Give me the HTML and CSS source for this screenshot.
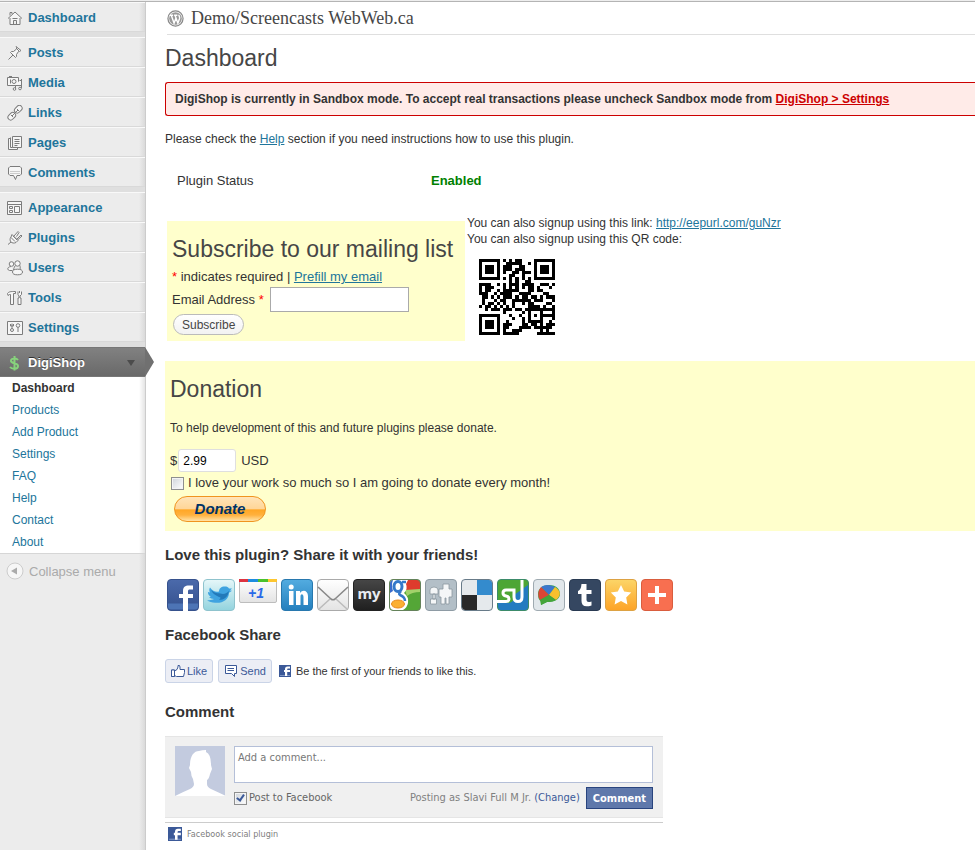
FILE: index.html
```
<!DOCTYPE html>
<html lang="en">
<head>
<meta charset="utf-8">
<meta name="viewport" content="width=device-width, initial-scale=1">
<title>Dashboard - Demo/Screencasts WebWeb.ca</title>
<link rel="stylesheet" href="styles.css">
</head>
<body>
<div class="topbar"></div>
<div class="layout">
  <nav class="sidebar" aria-label="Admin menu">
    <div class="menu-group">
      <a class="menu-item" href="#"><svg class="menu-icon" viewBox="0 0 16 16"><path d="M1 8.500 8 2l7 6.500M3 5.500v-3h2v1.500M3 8v6.500h10V8M6.500 14.500v-4h3v4M5.500 8.500h5"/></svg>Dashboard</a>
    </div>
    <div class="menu-group">
      <a class="menu-item" href="#"><svg class="menu-icon" viewBox="0 0 16 16"><path d="M9 1.500l5 4-1.500 1-1 0-2 3 0 2-1 1-5-5 1-1 2 0 3-2.500 0-1.500zM6 10l-4.500 4.500M9 3l3 3"/></svg>Posts</a>
      <a class="menu-item" href="#"><svg class="menu-icon" viewBox="0 0 16 16"><path d="M.5 2.500h11v8H.5zM2 1.500h3M3.500 4.500v4"/><circle cx="7" cy="6.500" r="2"/><path d="M14.500 4v9M8.500 11v3M8.500 10.500h6V5.500h-2"/><circle cx="7.500" cy="14" r="1.300"/><circle cx="13" cy="13.500" r="1.300"/></svg>Media</a>
      <a class="menu-item" href="#"><svg class="menu-icon" viewBox="0 0 16 16"><rect x="7" y="1.500" width="8.500" height="5.500" rx="2.700" transform="rotate(-45 11.200 4.200)"/><rect x=".5" y="8.500" width="8.500" height="5.500" rx="2.700" transform="rotate(-45 4.700 11.200)"/><path d="M5 11l6-6M4 10l2 2M10 4l2 2"/></svg>Links</a>
      <a class="menu-item" href="#"><svg class="menu-icon" viewBox="0 0 16 16"><path d="M5.500 1.500h9v11h-9zM3.500 3.500h-2v11h9v-2M3.500 2.500v10h2M7.500 4.500h5M7.500 6.500h5M7.500 8.500h5M7.500 10.500h3"/></svg>Pages</a>
      <a class="menu-item" href="#"><svg class="menu-icon" viewBox="0 0 16 16"><path d="M3 1.500h10l1.500 1.500v6L13 10.500h-3L8.500 14.500 6.500 10.500H3L1.500 9V3z"/><path d="M3 6.500h10M3 8.500h10" stroke="#ccc"/></svg>Comments</a>
    </div>
    <div class="menu-group">
      <a class="menu-item" href="#"><svg class="menu-icon" viewBox="0 0 16 16"><path d="M.5 1.500h14v13H.5zM.5 4.500h14M2.500 6.500h3v2h-3zM2.500 10.500h3v2h-3zM7.500 6.500h5v6h-5z"/></svg>Appearance</a>
      <a class="menu-item" href="#"><svg class="menu-icon" viewBox="0 0 16 16"><path d="M5 4.500l6 6-2 2c-2 1-4 .5-5-.5s-1.500-3 0-5zM7 6l4-4.500 1 1-2.500 4M10 9l4-4 1 1-4.500 4M4 12l-3 2.500M6 6l4 4M4 7.500l4 4"/></svg>Plugins</a>
      <a class="menu-item" href="#"><svg class="menu-icon" viewBox="0 0 16 16"><circle cx="4.500" cy="4" r="2.300"/><circle cx="10.500" cy="3.500" r="2.700"/><path d="M4 6.500C0 7 0 10 2.500 10.500h3M8 6c-1 2-1.500 3-1.500 4M13 5.500c0 1 .5 2 0 4"/><ellipse cx="10.500" cy="12" rx="5" ry="2.800"/></svg>Users</a>
      <a class="menu-item" href="#"><svg class="menu-icon" viewBox="0 0 16 16"><path d="M.5 3.500c1.500-2 3-2 8-2v2h-2v11h-3v-10h-1l-1.500 1zM11 1.500v3l1 1.500v2h-1v6.500h3V8h-1V6l1.500-1.500v-3M12.500 1v2"/></svg>Tools</a>
      <a class="menu-item" href="#"><svg class="menu-icon" viewBox="0 0 16 16"><path d="M.5 1.500h15v13H.5zM5 3.500v5M3.500 4v2h3V4M11 7v5"/><circle cx="5" cy="10" r="1.500"/><circle cx="11" cy="5.500" r="1.800"/></svg>Settings</a>
    </div>
    <div class="menu-group menu-group-open">
      <a class="menu-item menu-current" href="#"><svg class="menu-icon dollar" viewBox="0 0 16 16"><path d="M11 5C9.500 3 3.500 3 4 6s7 1.500 7 5-6 3.500-8 1M7.500 1v14.500"/></svg>DigiShop<span class="menu-toggle"></span></a>
      <ul class="submenu">
        <li><a class="submenu-current" href="#">Dashboard</a></li>
        <li><a href="#">Products</a></li>
        <li><a href="#">Add Product</a></li>
        <li><a href="#">Settings</a></li>
        <li><a href="#">FAQ</a></li>
        <li><a href="#">Help</a></li>
        <li><a href="#">Contact</a></li>
        <li><a href="#">About</a></li>
      </ul>
    </div>
    <button class="collapse" type="button"><svg class="collapse-icon" viewBox="0 0 18 18"><circle cx="9" cy="9" r="8" fill="#f6f6f6" stroke="#ccc"/><path d="M5 9l6-3.500v7z" fill="#aaa"/></svg>Collapse menu</button>
  </nav>

  <main class="content">
    <header class="site-header">
      <svg class="wp-logo" viewBox="0 0 18 18"><circle cx="9" cy="9" r="8" fill="#fff" stroke="#888" stroke-width="1.300"/><circle cx="9" cy="9" r="6.700" fill="#999"/><path d="M3 5.500h3.500M7.500 5.500H11M4.500 5.500l3 8.500 2-5.500M8.500 5.500l3 8.500 1.800-5c.5-2-.7-2.500-.8-4" fill="none" stroke="#fff" stroke-width="1.500"/></svg>
      <a href="#">Demo/Screencasts WebWeb.ca</a>
    </header>
    <h1>Dashboard</h1>
    <div class="notice">DigiShop is currently in Sandbox mode. To accept real transactions please uncheck Sandbox mode from <a href="#">DigiShop &gt; Settings</a></div>
    <p class="intro">Please check the <a href="#">Help</a> section if you need instructions how to use this plugin.</p>
    <dl class="status"><dt>Plugin Status</dt><dd>Enabled</dd></dl>

    <div class="signup">
      <form class="subscribe">
        <h2>Subscribe to our mailing list</h2>
        <p><span class="required">*</span> indicates required | <a href="#">Prefill my email</a></p>
        <div class="email-row"><label for="email">Email Address <span class="required">*</span></label><input id="email" type="email"></div>
        <button class="pill" type="button">Subscribe</button>
      </form>
      <div class="signup-links">
        <p>You can also signup using this link: <a href="#">http://eepurl.com/guNzr</a></p>
        <p>You can also signup using this QR code:</p>
        <svg class="qr" id="qr" viewBox="0 0 25 25" role="img" aria-label="QR code" shape-rendering="crispEdges"></svg>
      </div>
    </div>

    <form class="donation">
      <h2>Donation</h2>
      <p>To help development of this and future plugins please donate.</p>
      <div class="amount-row"><label for="amount">$</label><input id="amount" type="text" value="2.99"><span>USD</span></div>
      <div class="monthly"><input class="check" id="monthly" type="checkbox"><label for="monthly">I love your work so much so I am going to donate every month!</label></div>
      <button class="donate" type="button">Donate</button>
    </form>

    <h3>Love this plugin? Share it with your friends!</h3>
    <div class="share">
      <a href="#" aria-label="Facebook"><svg viewBox="0 0 32 32"><defs><linearGradient id="fb" x2="0" y2="1"><stop stop-color="#4b6aab"/><stop offset="1" stop-color="#34508d"/></linearGradient></defs><rect x=".5" y=".5" width="31" height="31" rx="3.500" fill="url(#fb)" stroke="#36528d"/><path d="M1 24.500h30v3a3 3 0 0 1-3 3H4a3 3 0 0 1-3-3z" fill="#4d74b5"/><path d="M16 32V19h-4v-4h4v-3c0-4 2-5.500 6-5.500h4v4h-3c-1.500 0-2 .5-2 2V15h5v4h-5v13z" fill="#fff"/></svg></a>
      <a href="#" aria-label="Twitter"><svg viewBox="0 0 32 32"><defs><linearGradient id="tw" x2="0" y2="1"><stop stop-color="#e6f7f9"/><stop offset="1" stop-color="#92d3de"/></linearGradient></defs><rect x=".5" y=".5" width="31" height="31" rx="3.500" fill="url(#tw)" stroke="#8fc3cd"/><path d="M4 21c3 .5 5 0 7-1-2 0-4-1-5-2h2c-3-2-3-4-3-5l2 .5c-1-2-1-3 0-5 3 4 6 5 9 4 0-3 2-5 6-5 2 0 3 .5 4 2h3l-2 2 2 .2-3 2c0 7-7 11-14 10-3 0-6-1-8-2.700z" fill="#3fa3e0"/><path d="M8 11c4 4 9 3 12 4 2 0 4-1 6-3-1 6-5 9-10 9 2-2 2-3 0-3-4-2-7-4-8-7z" fill="#2379b9"/></svg></a>
      <a href="#" class="plusone" aria-label="Google +1"><svg viewBox="0 0 38 32"><defs><linearGradient id="po" x2="0" y2="1"><stop stop-color="#fff"/><stop offset="1" stop-color="#e3e3e3"/></linearGradient></defs><rect x=".5" y=".5" width="37" height="23" rx="1.500" fill="url(#po)" stroke="#bdbdbd"/><path fill="#dd3340" d="M0 0h9v3H0z"/><path fill="#1d8cdf" d="M9 0h10v3H9z"/><path fill="#4bc22c" d="M19 0h10v3H19z"/><path fill="#fdc62f" d="M29 0h9v3h-9z"/><text x="9" y="19" class="plus-text">+1</text></svg></a>
      <a href="#" aria-label="LinkedIn"><svg viewBox="0 0 32 32"><defs><linearGradient id="li" x2="0" y2="1"><stop stop-color="#53ace0"/><stop offset="1" stop-color="#237fbd"/></linearGradient></defs><rect x=".5" y=".5" width="31" height="31" rx="3.500" fill="url(#li)" stroke="#2878ae"/><path d="M8 12h4.500v14H8zM15 12h4v2c3-4 8-2 8 3v9h-4.500v-8c0-3.500-3-3.500-3-.5V26H15z" fill="#fff"/><circle cx="10.200" cy="8" r="2.500" fill="#fff"/></svg></a>
      <a href="#" aria-label="Email"><svg viewBox="0 0 32 32"><rect x=".5" y=".5" width="31" height="31" rx="3.500" fill="url(#po)" stroke="#aaa"/><path d="M2 30l11-10M30 30L19 20" stroke="#bbb" stroke-width="1.500"/><path d="M1 8l13 12q2 1.500 4 0L31 8" fill="none" stroke="#888" stroke-width="1.600"/></svg></a>
      <a href="#" aria-label="MySpace"><svg viewBox="0 0 32 32"><defs><linearGradient id="my" x2="0" y2="1"><stop stop-color="#474747"/><stop offset="1" stop-color="#1f1f1f"/></linearGradient></defs><rect x=".5" y=".5" width="31" height="31" rx="3.500" fill="url(#my)" stroke="#222"/><text x="16" y="20" class="my-text">my</text></svg></a>
      <a href="#" aria-label="Google"><svg viewBox="0 0 32 32"><rect x=".5" y=".5" width="31" height="31" rx="3.500" fill="#54a637"/><path d="M15 1h13q3 0 3 3v7H15z" fill="#de3b2d"/><path d="M16 11l15-1v3q-8 0-13 4z" fill="#a2d16b"/><path d="M1 3q0-2 2-2h16l-2 4q2 5-2 9 5 4 4 10-1 5-5 7H4q-3 0-3-3z" fill="#fff"/><path d="M1 4q0-3 3-3-2 5 0 11l-3 2z" fill="#3a6bcb"/><ellipse cx="9" cy="7.500" rx="4" ry="5" fill="#fff" stroke="#3478c9" stroke-width="3"/><path d="M13 3h4M12 12q-3 3-1 4 5 2 5 6" stroke="#3478c9" fill="none" stroke-width="2.500"/><ellipse cx="9" cy="25" rx="6.500" ry="4" fill="#fbb034" stroke="#e9891b"/><rect x=".5" y=".5" width="31" height="31" rx="3.500" fill="none" stroke="#64825a"/></svg></a>
      <a href="#" aria-label="Digg"><svg viewBox="0 0 32 32"><rect x=".5" y=".5" width="31" height="31" rx="3.500" fill="#b3bfc7" stroke="#8e9ba4"/><g fill="#f4f6f7" stroke="#8b989f" stroke-width=".8"><path d="M5 15v-4q0-3 4-3t4 3v4zM8 15h2v5H8zM5.500 20h6v5h-6zM18 5h6v5h3v8h-3v7h-3v-6h-1v6h-4v-7h-2v-8h4z"/></g></svg></a>
      <a href="#" aria-label="Delicious"><svg viewBox="0 0 32 32"><rect x=".5" y=".5" width="31" height="31" rx="3.500" fill="#e5e9ec"/><path d="M16 1h12q3 0 3 3v12H16z" fill="#348bcd"/><path d="M1 16h15v15H4q-3 0-3-3z" fill="#292929"/><rect x=".5" y=".5" width="31" height="31" rx="3.500" fill="none" stroke="#687b89"/></svg></a>
      <a href="#" aria-label="StumbleUpon"><svg viewBox="0 0 32 32"><rect x=".5" y=".5" width="31" height="31" rx="3.500" fill="#4da635" stroke="#3c8b6a"/><path d="M1 24h9q7 0 7-6v-2l14-10v22q0 3-3 3H4q-3 0-3-3z" fill="#237bc0"/><path d="M0 22.500h9q3 0 3-2.500t-3-3q-3-.5-3-3 0-3 3-3h8v7q0 4.500 4 4.500t4-4.500V1" fill="none" stroke="#fff" stroke-width="3"/></svg></a>
      <a href="#" aria-label="Google Buzz"><svg viewBox="0 0 32 32"><rect x=".5" y=".5" width="31" height="31" rx="3.500" fill="#e1e7eb" stroke="#9faab1"/><path d="M16 6C9 6 5 10 5 15q0 6 3 7v4l6-3c8 0 13-3 13-8 0-6-5-9-11-9z" fill="#36a852"/><path d="M16 16L8 8q6-4 14 0z" fill="#3d77cc"/><path d="M8 8l8 8-9 5q-4-7 1-13z" fill="#dd4535"/><path d="M22 8q9 6 1 13l-7-5z" fill="#f8c02d"/><path d="M7 21l9-5 7 5q-3 2-9 2l-6 3z" fill="#45a53a"/></svg></a>
      <a href="#" aria-label="Tumblr"><svg viewBox="0 0 32 32"><rect x=".5" y=".5" width="31" height="31" rx="3.500" fill="#354761" stroke="#293a52"/><path d="M12.500 5h5v6h5v4h-5v6q0 3 5 1.500v4q-10 3-10-4.500v-7H9v-3q3-1 3.500-7z" fill="#fff"/></svg></a>
      <a href="#" aria-label="Bookmark"><svg viewBox="0 0 32 32"><defs><linearGradient id="bm" x2="0" y2="1"><stop stop-color="#fcd568"/><stop offset="1" stop-color="#fda326"/></linearGradient></defs><rect x=".5" y=".5" width="31" height="31" rx="3.500" fill="url(#bm)" stroke="#dda243"/><path d="M16 6l3.200 6.500 7 1-5 5 1.200 7L16 22l-6.400 3.500 1.200-7-5-5 7-1z" fill="#fff"/></svg></a>
      <a href="#" aria-label="More"><svg viewBox="0 0 32 32"><rect x=".5" y=".5" width="31" height="31" rx="3.500" fill="#f86f50" stroke="#d95d3e"/><path d="M14 7h4v7h7v4h-7v7h-4v-7H7v-4h7z" fill="#fff"/></svg></a>
    </div>

    <h3>Facebook Share</h3>
    <div class="fb-share">
      <button class="fb-button" type="button"><svg viewBox="0 0 14 14"><path d="M.5 6h3v6.500h-3z" fill="#8ea3ce"/><path d="M.5 6h3v6.500h-3zM3.500 7L6 5.500 7 3V1.500h1.500L9 3v2.500h4.500v3l-1 4h-7l-2-1"/></svg>Like</button>
      <button class="fb-button" type="button"><svg viewBox="0 0 14 14"><path d="M1.500 1.500h11v8h-2v3l-3-3h-6zM3.500 4.500h6.500M3.500 6.500h6.500"/></svg>Send</button>
      <svg class="fb-mark" viewBox="0 0 12 12"><path d="M0 0h12v12H0z" fill="#3b5998"/><path d="M1 10h10v1H1z" fill="#7f96c4"/><path d="M6 11V7H5V5h1V4q0-2.500 2.500-2.500H11v2H9q-.8 0-.8 1V5H11v2H8.200v4z" fill="#fff"/></svg>
      <span>Be the first of your friends to like this.</span>
    </div>

    <h3>Comment</h3>
    <form class="comments">
      <div class="comment-panel">
        <svg class="avatar" viewBox="0 0 50 50"><path d="M0 0h50v50H0z" fill="#c3cbdf"/><path d="M0 50q8-4 15-7 4-2 4-5l-1-5q-2-3-2-7l-2-4 1-3c0-9 4-14 9-14q3-1 7-1v2q5 2 5 13l1 4-2 5q-1 5-3 6v4q0 3 4 5l15 7z" fill="#fff"/></svg>
        <div class="comment-body">
          <textarea aria-label="Comment" placeholder="Add a comment..."></textarea>
          <div class="comment-actions">
            <input class="check" id="post" type="checkbox" checked><label for="post">Post to Facebook</label>
            <span class="posting">Posting as Slavi Full M Jr. <a href="#">(Change)</a></span>
            <button class="comment-button" type="button">Comment</button>
          </div>
        </div>
      </div>
      <div class="social"><svg class="fb-mark" viewBox="0 0 12 12"><path d="M0 0h12v12H0z" fill="#3b5998"/><path d="M1 10h10v1H1z" fill="#7f96c4"/><path d="M6 11V7H5V5h1V4q0-2.500 2.500-2.500H11v2H9q-.8 0-.8 1V5H11v2H8.200v4z" fill="#fff"/></svg>Facebook social plugin</div>
    </form>
  </main>
</div>
<script src="qr.js"></script>
</body>
</html>
```
FILE: styles.css
```
* { box-sizing: border-box; }
body, h1, h2, h3, p, dl, dd, ul { margin: 0; padding: 0; }
body {
  font: 12px/16px "Liberation Sans", Arial, sans-serif;
  color: #333;
  background: #fff;
  min-height: 100vh;
  display: flex;
  flex-direction: column;
}
a { color: #21759b; }
button, input, textarea { font-family: inherit; margin: 0; }
svg { display: block; flex: none; }
.topbar { height: 2px; background: #eee; border-bottom: 1px solid #b4b4b4; }
.layout { display: flex; flex: 1; }

.sidebar {
  flex: none;
  width: 146px;
  background: linear-gradient(to left, #dadada, transparent 6px), #ececec;
  border-right: 1px solid #ccc;
}
.menu-group { border-bottom: 5px solid #dfdfdf; }
.menu-group-open { border-bottom: 0; }
.menu-item {
  display: flex;
  align-items: center;
  gap: 5px;
  height: 30px;
  padding: 1px 0 0 7px;
  border-top: 1px solid #f9f9f9;
  border-bottom: 1px solid #d9d9d9;
  font-size: 13px;
  font-weight: bold;
  text-decoration: none;
}
.menu-icon { width: 16px; height: 16px; fill: #f6f6f6; stroke: #7c7c7c; stroke-width: 1; }
.menu-current {
  position: relative;
  color: #fff;
  background: linear-gradient(#818181, #696969);
  border-color: #777;
  text-shadow: 0 -1px 0 #333;
}
.menu-current::after {
  content: "";
  position: absolute;
  left: 100%;
  top: -1px;
  border: solid transparent;
  border-width: 15px 0 15px 9px;
  border-left-color: #707070;
}
.menu-icon.dollar { fill: none; stroke: #87d37c; stroke-width: 2; }
.menu-toggle {
  margin-left: auto;
  margin-right: 10px;
  border: 4px solid transparent;
  border-top: 6px solid #4c4c4c;
  border-bottom: 0;
}
.submenu {
  list-style: none;
  background: linear-gradient(to left, #e4e4e4, transparent 6px), #fff;
}
.submenu a {
  display: block;
  padding-left: 12px;
  line-height: 22px;
  text-decoration: none;
}
.submenu .submenu-current { color: #333; font-weight: bold; }
.collapse {
  display: flex;
  align-items: center;
  gap: 5px;
  width: 100%;
  height: 35px;
  padding: 0 0 0 6px;
  border: 0;
  border-top: 1px solid #d6d6d6;
  background: none;
  color: #aaa;
  font-size: 13px;
}
.collapse-icon { width: 18px; height: 18px; }

.content { flex: 1; min-width: 0; padding-left: 19px; }
.site-header {
  display: flex;
  align-items: center;
  gap: 7px;
  height: 33px;
  margin-left: 2px;
  border-bottom: 1px solid #dfdfdf;
  font-family: "Liberation Serif", serif;
  font-size: 18px;
}
.site-header a { color: #464646; text-decoration: none; }
.wp-logo { width: 17px; height: 17px; }
h1, h2 { font-weight: normal; font-size: 23px; line-height: 28px; color: #464646; }
h1 { margin: 9px 0 10px; }
h3 { font-size: 15px; line-height: 20px; }
.notice {
  height: 34px;
  padding: 8px 9px;
  overflow: hidden;
  white-space: nowrap;
  border: 1px solid #c00;
  border-right: 0;
  border-radius: 3px 0 0 3px;
  background: #ffebe8;
  font-weight: bold;
}
.notice a { color: #c00; }
.intro { margin-top: 15px; }
.status {
  display: grid;
  grid-template-columns: 254px 1fr;
  margin: 26px 0 32px 12px;
  font-size: 13px;
}
.status dd { color: green; font-weight: bold; }

.signup { display: flex; align-items: flex-start; margin-left: 2px; }
.subscribe {
  width: 298px;
  min-height: 120px;
  padding: 14px 5px 6px;
  background: #ffc;
  font-size: 13px;
}
.subscribe p { line-height: 20px; margin: 4px 0; }
.subscribe h2 { white-space: nowrap; }
.required { color: red; }
.email-row { display: flex; align-items: center; gap: 6px; margin-top: -4px; }
.email-row input { width: 139px; height: 25px; border: 1px solid #aaa; background: #fff; }
.pill {
  display: block;
  height: 21px;
  margin: 2px 0 0 1px;
  padding: 0 8px;
  border: 1px solid #bbb;
  border-radius: 11px;
  background: linear-gradient(#fff, #f2f2f2);
  color: #464646;
  font-size: 12px;
}
.signup-links { padding: 0 0 0 2px; margin-top: -6px; height: 146px; }
.qr { width: 76px; height: 76px; margin: 12px; }

.donation { padding: 14px 5px 9px; background: #ffc; font-size: 13px; }
.donation p { margin: 17px 0 13px; font-size: 12px; }
.amount-row { display: flex; align-items: center; gap: 1px; }
.amount-row input {
  width: 58px;
  height: 23px;
  margin-right: 4px;
  padding: 0 4px;
  border: 1px solid #dfdfdf;
  border-radius: 3px;
  background: #fff;
  font-size: 12px;
}
.monthly { display: flex; align-items: center; gap: 4px; margin: 3px 0 5px; padding-left: 1px; }
.check {
  appearance: none;
  width: 13px;
  height: 13px;
  flex: none;
  border: 1px solid #8e8f8f;
  background: linear-gradient(135deg, #cfd4da, #fff);
  box-shadow: inset 0 0 0 1px #f4f4f4;
}
.check:checked::after {
  content: "";
  display: block;
  width: 3px;
  height: 6px;
  margin: 0 0 0 3px;
  border: solid #3b5998;
  border-width: 0 2px 2px 0;
  transform: rotate(35deg);
}
.donate {
  display: block;
  width: 92px;
  height: 26px;
  margin-left: 4px;
  padding: 0;
  border: 1px solid #f0941f;
  border-radius: 13px;
  background: linear-gradient(#ffe4b8, #ffd699 48%, #ffa726 54%, #ffb13d 75%, #ffe3a8);
  color: #036;
  font: italic bold 15px/22px "Liberation Sans", Arial, sans-serif;
}
.donation + h3 { margin-top: 14px; }

.share { display: flex; gap: 4px; margin: 14px 0 14px 2px; }
.share a { width: 32px; height: 32px; }
.share .plusone { width: 38px; }
.share svg { width: 100%; height: 32px; }
.plus-text { font: italic bold 14px "Liberation Sans", sans-serif; fill: #2969e8; }
.my-text { font: bold 15px "Noto Sans", sans-serif; fill: #e8ecf2; text-anchor: middle; }
.fb-share { display: flex; align-items: center; gap: 5px; margin: 14px 0 19px; font-size: 11px; }
.fb-button {
  display: flex;
  align-items: center;
  gap: 2px;
  height: 24px;
  padding: 0 5px;
  border: 1px solid #cad4e7;
  border-radius: 3px;
  background: #eceef5;
  color: #3b5998;
  font-size: 11px;
}
.fb-button svg { width: 14px; height: 14px; fill: #fff; stroke: #3b5998; }
.fb-mark { width: 12px; height: 12px; }
.fb-share .fb-mark { margin-left: 2px; }

.comments {
  width: 498px;
  max-width: 100%;
  margin-top: 14px;
  font: 11px/14px "DejaVu Sans Condensed", "DejaVu Sans", sans-serif;
  color: #666;
}
.comment-panel {
  display: flex;
  gap: 9px;
  padding: 9px 10px 8px;
  border: solid #e5e5e5;
  border-width: 1px 0;
  background: #f0f0f0;
}
.avatar { width: 50px; height: 50px; }
.comment-body { flex: 1; min-width: 0; }
.comment-body textarea {
  display: block;
  width: 100%;
  height: 37px;
  padding: 4px 3px;
  border: 1px solid #b4bfd8;
  background: #fff;
  font-size: 11px;
  resize: none;
}
.comment-body textarea::placeholder { color: #777; }
.comment-actions { display: flex; align-items: center; gap: 2px; margin-top: 4px; }
.posting { margin-left: auto; color: gray; }
.posting a { color: #3b5998; text-decoration: none; }
.comment-button {
  height: 22px;
  margin-left: 4px;
  padding: 0 6px;
  border: 1px solid #29447e;
  background: #5f78ab;
  color: #fff;
  font-size: 11px;
  font-weight: bold;
}
.social {
  display: flex;
  align-items: center;
  gap: 5px;
  margin-top: 4px;
  padding: 4px 3px 0;
  border-top: 1px solid #ccc;
  font-size: 9px;
  color: gray;
}
.social .fb-mark { width: 14px; height: 14px; }
```
FILE: qr.js
```
// Draws a version 2-L QR code and keeps the mask with the lowest penalty.
const SIZE = 25;
const MASKS = [
  (x, y) => (x + y) % 2,
  (x, y) => y % 2,
  (x) => x % 3,
  (x, y) => (x + y) % 3,
  (x, y) => (Math.floor(x / 3) + Math.floor(y / 2)) % 2,
  (x, y) => (x * y) % 2 + (x * y) % 3,
  (x, y) => ((x * y) % 2 + (x * y) % 3) % 2,
  (x, y) => ((x + y) % 2 + (x * y) % 3) % 2
];

function codewords(text) {
  const dataCount = 34, eccCount = 10;
  let bits = '';
  const add = (value, n) => { bits += value.toString(2).padStart(n, '0'); };
  add(4, 4);
  add(text.length, 8);
  for (const c of text) add(c.charCodeAt(0), 8);
  add(0, 4);
  while (bits.length % 8) bits += '0';
  const data = bits.match(/.{8}/g).map(s => parseInt(s, 2));
  for (let pad = 0xEC; data.length < dataCount; pad ^= 0xEC ^ 0x11) data.push(pad);
  const mul = (x, y) => {
    let z = 0;
    for (let i = 7; i >= 0; i--) {
      z = (z << 1) ^ ((z >>> 7) * 0x11D);
      z ^= ((y >>> i) & 1) * x;
    }
    return z;
  };
  const div = Array(eccCount).fill(0);
  div[eccCount - 1] = 1;
  let root = 1;
  for (let i = 0; i < eccCount; i++) {
    for (let j = 0; j < eccCount; j++) {
      div[j] = mul(div[j], root);
      if (j + 1 < eccCount) div[j] ^= div[j + 1];
    }
    root = mul(root, 2);
  }
  const rem = Array(eccCount).fill(0);
  for (const d of data) {
    const k = d ^ rem.shift();
    rem.push(0);
    div.forEach((c, i) => { rem[i] ^= mul(c, k); });
  }
  return data.concat(rem);
}

function build(words, mask) {
  const m = Array.from({ length: SIZE }, () => Array(SIZE).fill(0));
  const fixed = m.map(row => row.slice());
  const set = (x, y, v) => {
    if (x < 0 || y < 0 || x >= SIZE || y >= SIZE) return;
    m[y][x] = v ? 1 : 0;
    fixed[y][x] = 1;
  };
  for (let i = 0; i < SIZE; i++) { set(6, i, i % 2 === 0); set(i, 6, i % 2 === 0); }
  for (const [cx, cy, r] of [[3, 3, 4], [21, 3, 4], [3, 21, 4], [18, 18, 2]]) {
    for (let dy = -r; dy <= r; dy++) for (let dx = -r; dx <= r; dx++) {
      const d = Math.max(Math.abs(dx), Math.abs(dy));
      set(cx + dx, cy + dy, r === 2 ? d !== 1 : d !== 2 && d !== 4);
    }
  }
  const info = 8 | mask;
  let rem = info;
  for (let i = 0; i < 10; i++) rem = (rem << 1) ^ ((rem >>> 9) * 0x537);
  const format = (info << 10 | rem) ^ 0x5412;
  const bit = i => format >>> i & 1;
  for (let i = 0; i < 6; i++) set(8, i, bit(i));
  set(8, 7, bit(6)); set(8, 8, bit(7)); set(7, 8, bit(8));
  for (let i = 9; i < 15; i++) set(14 - i, 8, bit(i));
  for (let i = 0; i < 8; i++) set(24 - i, 8, bit(i));
  for (let i = 8; i < 15; i++) set(8, 10 + i, bit(i));
  set(8, 17, 1);
  let n = 0;
  for (let right = 24; right >= 1; right -= 2) {
    if (right === 6) right = 5;
    for (let v = 0; v < SIZE; v++) for (let j = 0; j < 2; j++) {
      const x = right - j, y = ((right + 1) & 2) === 0 ? 24 - v : v;
      if (fixed[y][x]) continue;
      let value = n < 352 ? words[n >> 3] >> (7 - (n & 7)) & 1 : 0;
      n++;
      if (MASKS[mask](x, y) === 0) value ^= 1;
      m[y][x] = value;
    }
  }
  return m;
}

function penalty(m) {
  let score = 0;
  const lines = m.concat(m[0].map((_, x) => m.map(row => row[x]))).map(l => l.join(''));
  for (const line of lines) {
    for (const run of line.match(/0{5,}|1{5,}/g) || []) score += run.length - 2;
    for (let i = 0; i + 11 <= SIZE; i++) {
      const part = line.slice(i, i + 11);
      if (part === '10111010000' || part === '00001011101') score += 40;
    }
  }
  for (let y = 0; y < SIZE - 1; y++) for (let x = 0; x < SIZE - 1; x++) {
    const sum = m[y][x] + m[y][x + 1] + m[y + 1][x] + m[y + 1][x + 1];
    if (sum === 0 || sum === 4) score += 3;
  }
  const dark = m.flat().reduce((a, b) => a + b) / (SIZE * SIZE);
  return score + Math.floor(Math.abs(dark - 0.5) * 20) * 10;
}

const words = codewords('http://eepurl.com/guNzr');
const best = MASKS.map((_, i) => build(words, i)).sort((a, b) => penalty(a) - penalty(b))[0];
let d = '';
best.forEach((row, y) => row.forEach((v, x) => { if (v) d += `M${x} ${y}h1v1h-1z`; }));
const path = document.createElementNS('http://www.w3.org/2000/svg', 'path');
path.setAttribute('d', d);
document.getElementById('qr').append(path);
```
